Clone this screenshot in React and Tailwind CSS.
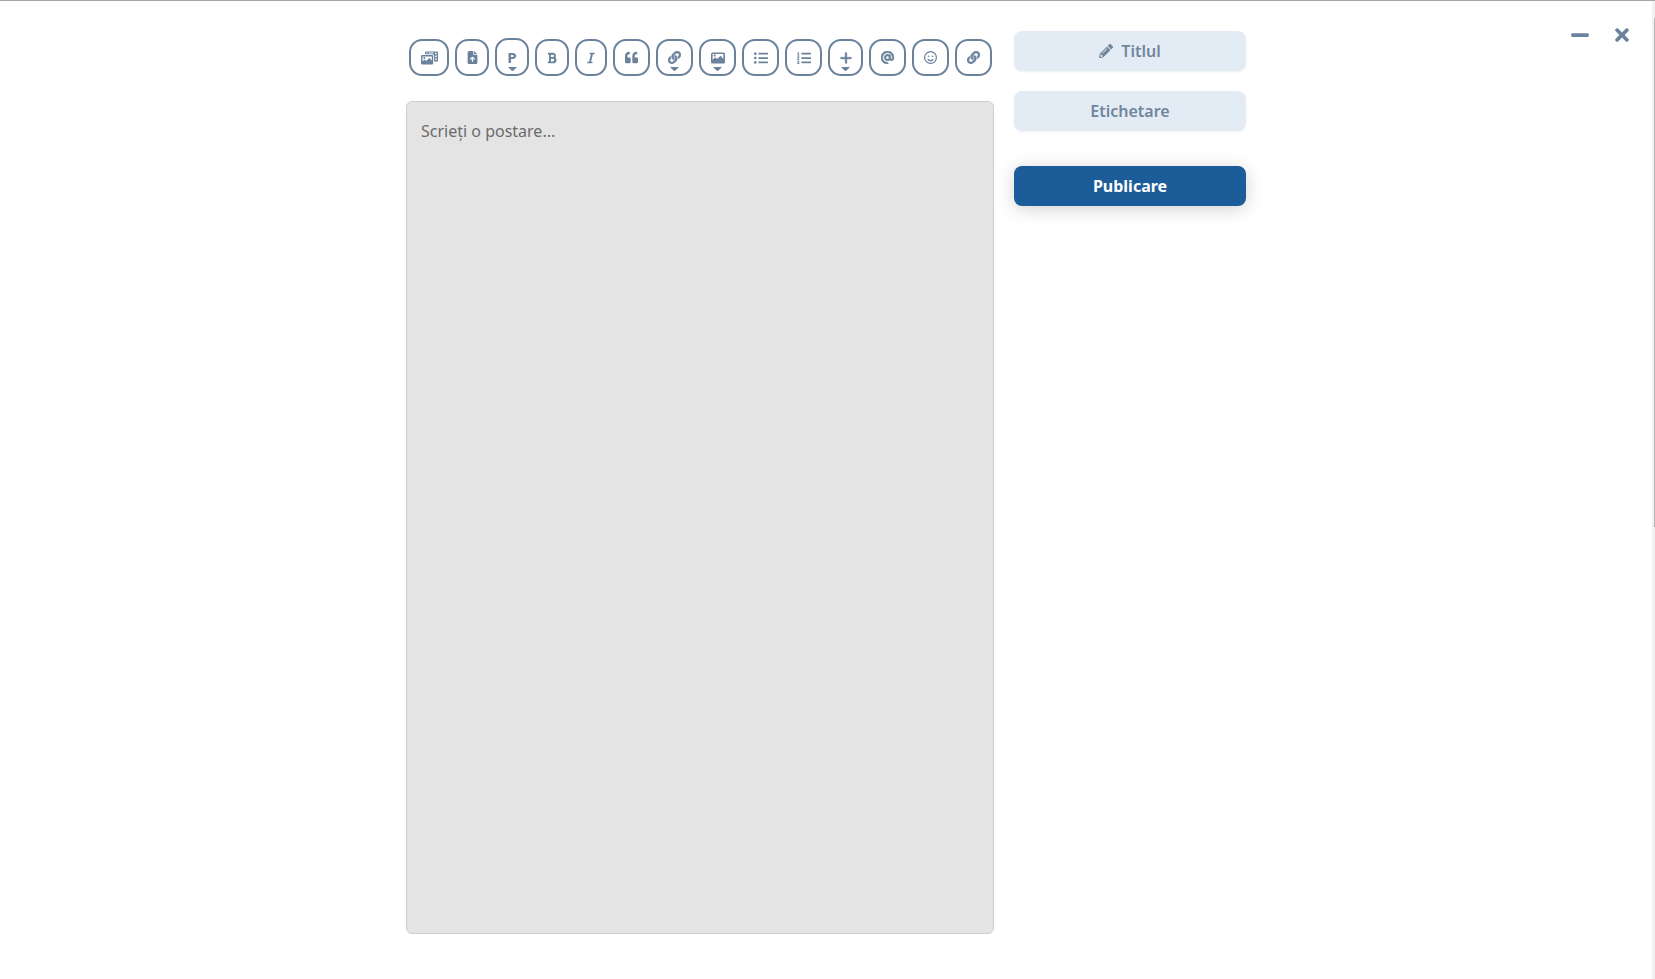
import React from "react";
import { FaBold, FaItalic, FaLink, FaListUl, FaListOl, FaMinus, FaPencilAlt, FaQuoteLeft, FaTimes } from "react-icons/fa";
import { FaFileArrowUp, FaAt, FaPlus, FaRegFaceSmile } from "react-icons/fa6";

const LetterP = (props) => (
  <span {...props} aria-hidden="true">
    P
  </span>
);

const MediaIcon = (props) => (
  <svg viewBox="0 0 17 14" fill="currentColor" fillRule="evenodd" aria-hidden="true" {...props}>
    <path d="M5 0.5h11a1 1 0 0 1 1 1v8a1 1 0 0 1-1 1h-2.9V5a1.8 1.8 0 0 0-1.8-1.8H4V1.5a1 1 0 0 1 1-1zM5.2 1.5v1h1.3v-1zM7.6 1.6v.9h4.8v-.9zM14.2 1.7v1.6h1.5V1.7zM14.2 4.6v1.6h1.5V4.6zM14.2 7.5v1.6h1.5V7.5z" />
    <path d="M1.2 4h9.8a1.2 1.2 0 0 1 1.2 1.2v7.1a1.2 1.2 0 0 1-1.2 1.2H1.2A1.2 1.2 0 0 1 0 12.3V5.2A1.2 1.2 0 0 1 1.2 4zM1.4 5.4v4.9L3.6 8.6l1.5 1.3L8.3 7l2.5 2.5V5.4zM3.3 6a1 1 0 1 1 0 2 1 1 0 0 1 0-2z" />
  </svg>
);

const ImageIcon = (props) => (
  <svg viewBox="0 0 14 12" fill="currentColor" fillRule="evenodd" aria-hidden="true" {...props}>
    <path d="M1.5 .5h11A1.5 1.5 0 0 1 14 2v8a1.5 1.5 0 0 1-1.5 1.5h-11A1.5 1.5 0 0 1 0 10V2A1.5 1.5 0 0 1 1.5 .5zM1.6 2v5.7L4.3 5.3l1.9 1.8L9.5 3.7l2.9 3.2V2zM3.6 2.5a1.1 1.1 0 1 1 0 2.2 1.1 1.1 0 0 1 0-2.2z" />
  </svg>
);

const tools = [
  { label: "Media", icon: MediaIcon, width: "w-10", glyph: "h-[14px] w-[17px]" },
  { label: "Fișier", icon: FaFileArrowUp, width: "w-[34px]", glyph: "size-[13px]" },
  { label: "Paragraf", icon: LetterP, width: "w-[34px]", height: "h-[38px]", glyph: "text-[15px] leading-none font-bold", menu: true },
  { label: "Aldin", icon: FaBold, width: "w-[34px]", glyph: "size-3" },
  { label: "Cursiv", icon: FaItalic, width: "w-8", glyph: "size-3" },
  { label: "Citat", icon: FaQuoteLeft, width: "w-[37px]", glyph: "size-[13px]" },
  { label: "Legătură", icon: FaLink, width: "w-[37px]", glyph: "size-[13px] stroke-current stroke-[16]", menu: true },
  { label: "Imagine", icon: ImageIcon, width: "w-[37px]", glyph: "h-3 w-[14px]", menu: true },
  { label: "Listă", icon: FaListUl, width: "w-[37px]", glyph: "size-[14px]" },
  { label: "Listă numerotată", icon: FaListOl, width: "w-[37px]", glyph: "size-[14px]" },
  { label: "Adăugare", icon: FaPlus, width: "w-[35px]", glyph: "size-[14px] stroke-current stroke-[14]", menu: true },
  { label: "Mențiune", icon: FaAt, width: "w-[37px]", glyph: "size-[13px] stroke-current stroke-[22]" },
  { label: "Emoji", icon: FaRegFaceSmile, width: "w-[37px]", glyph: "size-[13px]" },
  { label: "Adresă", icon: FaLink, width: "w-[37px]", glyph: "size-[13px] stroke-current stroke-[16]" },
];

function ToolButton({ label, icon: Icon, width, height = "h-[37px]", glyph, menu }) {
  return (
    <button
      type="button"
      aria-label={label}
      className={`relative flex shrink-0 items-center justify-center rounded-[13px] border-2 border-[#6a829b] text-[#6a829b] ${width} ${height}`}
    >
      <Icon className={glyph} />
      {menu && (
        <svg viewBox="0 0 9 4" className="absolute inset-x-0 bottom-[3px] mx-auto h-1 w-[9px] fill-current" aria-hidden="true">
          <path d="M0 0h9L5.5 3.5q-1 .8-2 0z" />
        </svg>
      )}
    </button>
  );
}

export default function App() {
  return (
    <div className="flex min-h-screen border-t border-[#a6a6a6] bg-white font-['Noto_Sans',sans-serif]">
      <main className="flex flex-1 justify-center gap-5 pt-[30px] pb-[45px] pl-[406px]">
        <section className="flex w-[588px] flex-col gap-[25px]">
          <div role="toolbar" aria-label="Formatare" className="flex items-end gap-[6px] pt-[7px] pl-[3px]">
            {tools.map((tool) => (
              <ToolButton key={tool.label} {...tool} />
            ))}
          </div>
          <textarea
            aria-label="Postare"
            placeholder="Scrieți o postare..."
            className="w-full flex-1 resize-none rounded-md border border-[#cccfd2] bg-[#e4e4e4] px-[14px] py-[17px] text-base outline-none placeholder:text-[#6b6b6b]"
          />
        </section>
        <aside className="flex w-[232px] flex-col text-base font-semibold">
          <button type="button" className="flex h-10 items-center justify-center gap-2 rounded-lg bg-[#e3ecf5] text-[#70869d] shadow-sm shadow-black/5">
            <FaPencilAlt className="size-[14px]" />
            Titlul
          </button>
          <button type="button" className="mt-5 h-10 rounded-lg bg-[#e3ecf5] text-[#70869d] shadow-sm shadow-black/5">
            Etichetare
          </button>
          <button type="button" className="mt-[35px] h-10 rounded-lg bg-[#1c5c98] font-bold text-white shadow-[0_3px_18px_rgba(0,0,0,0.18)]">
            Publicare
          </button>
        </aside>
        <div className="-mt-[6px] flex flex-1 items-start justify-end gap-[22px] pr-5 text-[#6a829b]">
          <button type="button" aria-label="Minimizare">
            <FaMinus className="size-5" />
          </button>
          <button type="button" aria-label="Închidere">
            <FaTimes className="size-5" />
          </button>
        </div>
      </main>
      <div className="flex w-[3px] flex-col items-end bg-[#f1f1f1] pt-[17px]" aria-hidden="true">
        <div className="h-[52vh] w-px bg-[#b9b9b9]" />
      </div>
    </div>
  );
}
